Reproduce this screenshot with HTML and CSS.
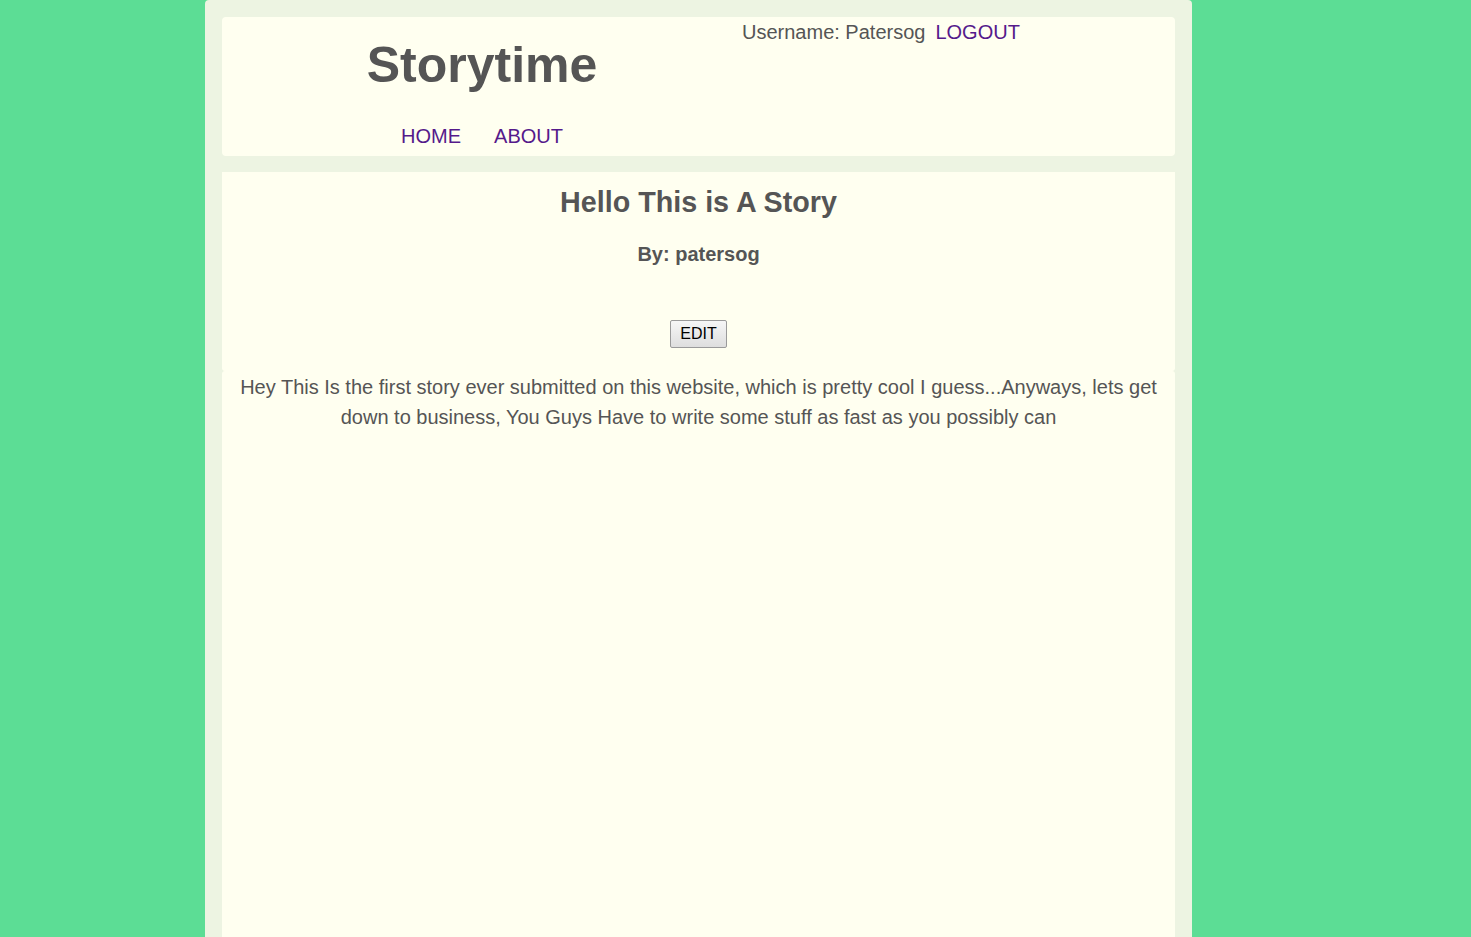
FILE: index.html
```html
<!DOCTYPE html>
<html>
<head>
<meta charset="utf-8">
<title>Storytime</title>
<link rel="stylesheet" href="styles.css">
</head>
<body>
<div class="wrap">
  <header class="panel header">
    <div class="brand">
      <h1 class="logo">Storytime</h1>
      <nav class="nav">
        <a href="#">HOME</a>
        <a href="#">ABOUT</a>
      </nav>
    </div>
    <div class="user">
      <span>Username: Patersog</span>
      <a href="#">LOGOUT</a>
    </div>
  </header>
  <section class="panel story-head">
    <h2 class="story-title">Hello This is A Story</h2>
    <h3 class="story-by">By: patersog</h3>
    <button class="edit">EDIT</button>
  </section>
  <section class="panel story-body">
    <p>Hey This Is the first story ever submitted on this website, which is pretty cool I guess...Anyways, lets get down to business, You Guys Have to write some stuff as fast as you possibly can</p>
  </section>
</div>
</body>
</html>
```

FILE: styles.css
```css
html, body {
  margin: 0;
  padding: 0;
  height: 100%;
}
body {
  background: #5cdd95;
  font-family: "Liberation Sans", Arial, sans-serif;
  color: #555;
}
.wrap {
  width: 953px;
  margin-left: 205px;
  padding: 17px 17px 0;
  background: #edf4e2;
  border-radius: 4px 4px 0 0;
  min-height: calc(100% - 17px);
  display: flex;
  flex-direction: column;
}
.panel {
  background: #fffff0;
}
a {
  color: #551a8b;
  text-decoration: none;
}
.header {
  display: flex;
  height: 139px;
  border-radius: 4px;
  margin-bottom: 16px;
}
.brand {
  width: 520px;
  display: flex;
  flex-direction: column;
  align-items: center;
}
.logo {
  margin: 20px 0 0;
  font-size: 50px;
  line-height: 56px;
  font-weight: bold;
  color: #555;
}
.nav {
  display: flex;
  gap: 33px;
  margin-top: 31px;
  font-size: 20px;
  line-height: 24px;
}
.user {
  font-size: 20px;
  line-height: 24px;
  margin-top: 3px;
  display: flex;
  gap: 10px;
  align-items: flex-start;
}
.story-head {
  text-align: center;
  height: 199px;
  border-radius: 0 0 3px 3px;
  padding-top: 14px;
  box-sizing: border-box;
}
.story-title {
  margin: 0;
  font-size: 28.7px;
  line-height: 32px;
  font-weight: bold;
}
.story-by {
  margin: 24px 0 0;
  font-size: 20px;
  line-height: 24px;
  font-weight: bold;
}
.edit {
  margin-top: 54px;
  font-family: "Liberation Sans", Arial, sans-serif;
  font-size: 16px;
  color: #000;
  height: 28px;
  padding: 0 9px;
  border: 1px solid #9a9a9a;
  border-radius: 2px;
  background: linear-gradient(#f6f6f6, #dedede);
}
.story-body {
  flex: 1;
  border-radius: 3px 3px 0 0;
}
.story-body p {
  margin: 0;
  padding: 1px 10px 0;
  font-size: 20px;
  line-height: 30px;
  text-align: center;
}
```
